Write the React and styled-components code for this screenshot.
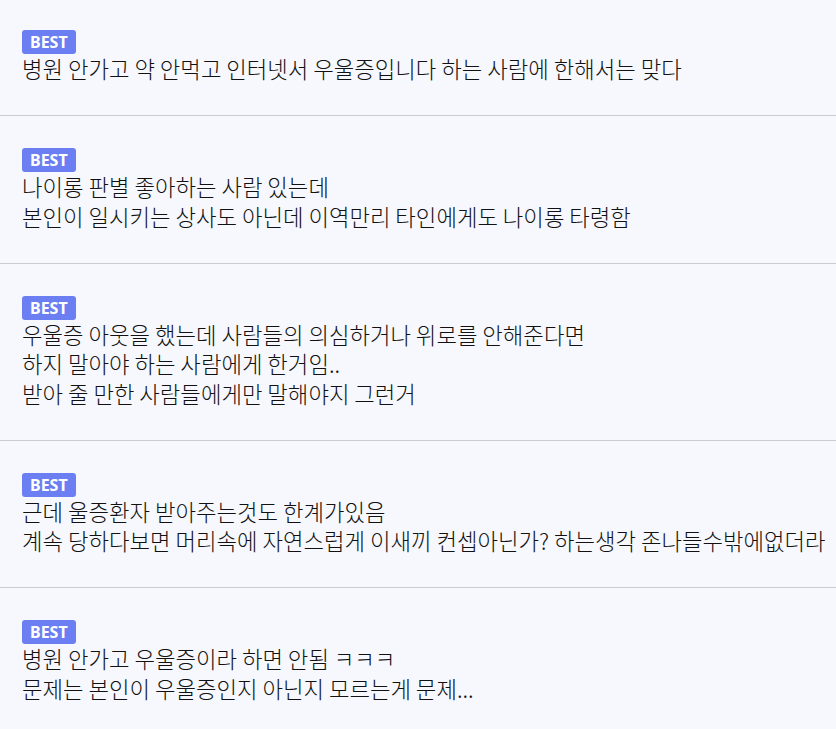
import React from "react";
import styled, { createGlobalStyle } from "styled-components";

const comments = [
  ["병원 안가고 약 안먹고 인터넷서 우울증입니다 하는 사람에 한해서는 맞다"],
  [
    "나이롱 판별 좋아하는 사람 있는데",
    "본인이 일시키는 상사도 아닌데 이역만리 타인에게도 나이롱 타령함",
  ],
  [
    "우울증 아웃을 했는데 사람들의 의심하거나 위로를 안해준다면",
    "하지 말아야 하는 사람에게 한거임..",
    "받아 줄 만한 사람들에게만 말해야지 그런거",
  ],
  [
    "근데 울증환자 받아주는것도 한계가있음",
    "계속 당하다보면 머리속에 자연스럽게 이새끼 컨셉아닌가? 하는생각 존나들수밖에없더라",
  ],
  ["병원 안가고 우울증이라 하면 안됨 ㅋㅋㅋ", "문제는 본인이 우울증인지 아닌지 모르는게 문제..."],
];

const GlobalStyle = createGlobalStyle`
  html, body {
    margin: 0;
    padding: 0;
    background: #f6f8fd;
  }
  body {
    font-family: "Noto Sans CJK KR", "Noto Sans", sans-serif;
    color: #111;
  }
`;

const List = styled.ul`
  list-style: none;
  margin: 0;
  padding: 0;
  background: #f6f8fd;
`;

const Item = styled.li`
  padding: 32px 22px 31.5px;
  border-bottom: 1px solid #c9ccd1;

  &:first-child {
    padding-top: 30px;
  }
`;

const Badge = styled.span`
  display: inline-flex;
  align-items: center;
  justify-content: center;
  height: 24px;
  padding: 0 8px;
  border-radius: 3px;
  background: #6b7ff2;
  color: #fff;
  font-family: "Noto Sans", "Open Sans", sans-serif;
  font-weight: 700;
  font-size: 16px;
  vertical-align: top;
`;

const Body = styled.p`
  margin: 0;
  font-size: 22.3px;
  font-weight: 300;
  line-height: 29.5px;
  white-space: nowrap;
`;

export default function App() {
  return (
    <>
      <GlobalStyle />
      <List>
        {comments.map((lines, i) => (
          <Item key={i}>
            <Badge>BEST</Badge>
            {lines.map((line, j) => (
              <Body key={j}>{line}</Body>
            ))}
          </Item>
        ))}
      </List>
    </>
  );
}
